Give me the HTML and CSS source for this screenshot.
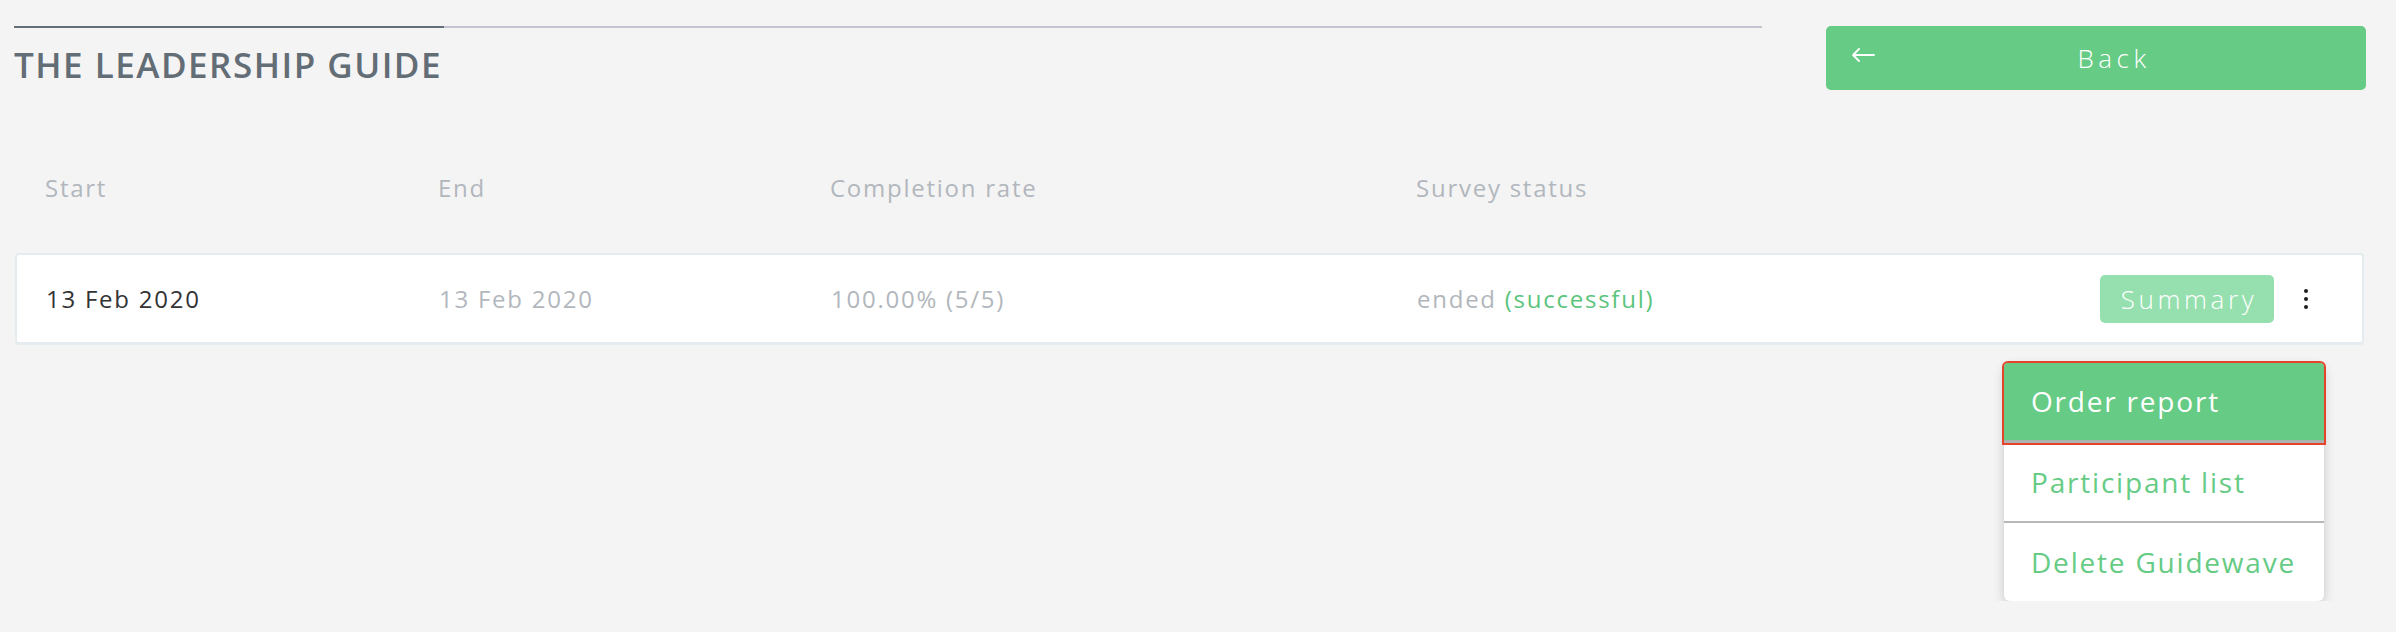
FILE: index.html
```html
<!DOCTYPE html>
<html lang="en">
<head>
    <meta charset="UTF-8">
    <meta name="viewport" content="width=device-width, initial-scale=1.0">
    <title>The Leadership Guide</title>
    <link rel="stylesheet" href="styles.css">
</head>
<body>
    <div class="page">
        <div class="top">
            <div class="heading">
                <div class="progress"><span></span></div>
                <h1>THE LEADERSHIP GUIDE</h1>
            </div>
            <button class="back-btn" type="button">
                <svg class="back-arrow" width="24" height="14" viewBox="0 0 24 14">
                    <path d="M23 7H2M8 1L2 7l6 6" fill="none" stroke="#fff" stroke-width="1.8" stroke-linecap="round" stroke-linejoin="round"/>
                </svg>
                <span class="back-label">Back</span>
            </button>
        </div>

        <div class="waves">
            <div class="cols head">
                <div>Start</div>
                <div>End</div>
                <div>Completion rate</div>
                <div>Survey status</div>
            </div>

            <div class="cols row">
                <div class="date">13 Feb 2020</div>
                <div class="muted">13 Feb 2020</div>
                <div class="muted">100.00% (5/5)</div>
                <div class="muted">ended <span class="ok">(successful)</span></div>
                <div class="actions">
                    <button class="summary-btn" type="button">Summary</button>
                    <button class="kebab" type="button"><i></i><i></i><i></i></button>
                </div>
            </div>

            <div class="wave-options">
                <div class="options-list">
                    <div class="opt current">Order report</div>
                    <div class="opt">Participant list</div>
                    <div class="opt divided">Delete Guidewave</div>
                </div>
            </div>
        </div>
    </div>
</body>
</html>
```

FILE: styles.css
```css
body {
    margin: 0;
    background-color: #f4f4f4;
    font-family: 'Open Sans', 'Liberation Sans', sans-serif;
}
.page {
    padding: 26px 30px 0 14px;
}
.top {
    display: flex;
    align-items: flex-start;
    gap: 64px;
}
.heading {
    flex: 1;
}
.progress {
    height: 2px;
    background-color: #c4c4d0;
}
.progress span {
    display: block;
    width: 430px;
    height: 2px;
    background-color: #646e77;
}
.heading h1 {
    margin: 19px 0 0;
    font-size: 35px;
    line-height: 35px;
    font-weight: 600;
    letter-spacing: 1.5px;
    color: #636d76;
}
.back-btn {
    width: 540px;
    height: 64px;
    display: flex;
    align-items: center;
    padding: 0 25px;
    border: none;
    border-radius: 5px;
    background-color: #66cb84;
    color: #fff;
    font-family: inherit;
    cursor: pointer;
}
.back-arrow {
    flex: none;
    margin-top: -6px;
}
.back-label {
    flex: 1;
    text-align: center;
    padding-left: 12px;
    font-size: 26px;
    font-weight: 300;
    letter-spacing: 4.5px;
}

.waves {
    margin-top: 86px;
}
.cols {
    display: grid;
    grid-template-columns: 393px 392px 586px 1fr auto;
    align-items: center;
    font-size: 24px;
    letter-spacing: 1.75px;
}
.head {
    padding: 0 0 0 31px;
    line-height: 24px;
    color: #b2b7bd;
}
.row {
    margin: 53px 2px 0 1px;
    height: 87px;
    padding: 0 0 0 29px;
    background-color: #fff;
    border: 2px solid #e4ecef;
    border-bottom-width: 3px;
    border-radius: 4px;
}
.date {
    color: #333;
}
.muted {
    color: #b2b7bd;
}
.ok {
    color: #5cc47c;
}
.actions {
    display: flex;
    align-items: center;
    gap: 20px;
    padding-right: 44px;
}
.summary-btn {
    width: 174px;
    height: 48px;
    padding: 0 0 0 4px;
    border: none;
    border-radius: 5px;
    background-color: #96e0b0;
    color: #fff;
    font-family: inherit;
    font-size: 26px;
    font-weight: 300;
    letter-spacing: 3.6px;
}
.kebab {
    width: 24px;
    height: 30px;
    padding: 0;
    border: none;
    background: none;
    display: flex;
    flex-direction: column;
    align-items: center;
    justify-content: center;
    gap: 4px;
}
.kebab i {
    width: 4px;
    height: 4px;
    border-radius: 50%;
    background-color: #1e1e1e;
}

/* options opened from the kebab */
.wave-options {
    display: flex;
    justify-content: flex-end;
    padding: 18px 42px 0 0;
}
.options-list {
    width: 320px;
    background-color: #fff;
    border-radius: 6px;
    box-shadow: 0 4px 12px rgba(0, 0, 0, 0.18);
    font-size: 28px;
    letter-spacing: 1.8px;
    color: #66cb84;
}
.opt {
    height: 78px;
    line-height: 78px;
    padding-left: 27px;
}
.opt.current {
    height: 77px;
    line-height: 77px;
    background-color: #66cb84;
    color: #fff;
    border-bottom: 3px solid #aab3ad;
    border-radius: 4px 4px 0 0;
    outline: 2px solid #e5432b;
}
.opt.divided {
    border-top: 2px solid #b8b8b8;
}
```
